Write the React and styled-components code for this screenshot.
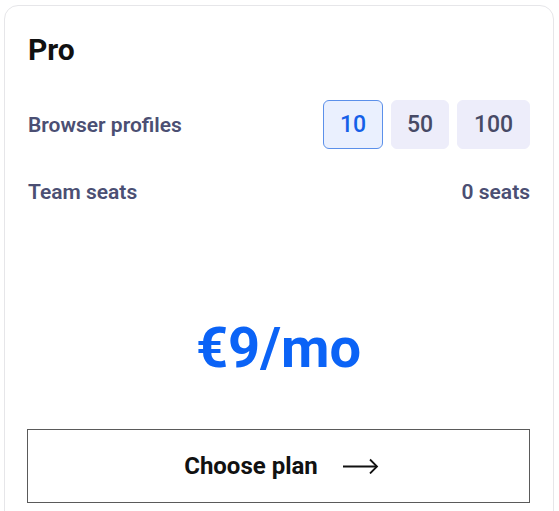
import React, { useState } from "react";
import styled, { createGlobalStyle } from "styled-components";

const GlobalStyle = createGlobalStyle`
  body {
    margin: 0;
    background: #ffffff;
    font-family: Roboto, "Liberation Sans", sans-serif;
  }
`;

const Card = styled.div`
  box-sizing: border-box;
  width: 550px;
  height: 540px;
  margin: 5px 0 0 4px;
  padding: 26px 23px 0 22px;
  border: 1px solid #e6e6e9;
  border-radius: 14px;
  background: #fff;
  display: flex;
  flex-direction: column;
`;

const Title = styled.h2`
  margin: 0;
  font-size: 30px;
  line-height: 36px;
  font-weight: 700;
  color: #111;
  padding-left: 1px;
`;

const Row = styled.div`
  display: flex;
  align-items: center;
  justify-content: space-between;
  margin-top: ${(p) => p.$gap}px;
  padding-left: 1px;
`;

const Label = styled.span`
  font-size: 21px;
  line-height: 24px;
  font-weight: 600;
  color: #4b4f73;
`;

const Options = styled.div`
  display: flex;
  gap: 8px;
`;

const Option = styled.button`
  box-sizing: border-box;
  height: 49px;
  min-width: ${(p) => p.$w}px;
  padding: 0;
  border-radius: 6px;
  border: 1px solid ${(p) => (p.$active ? "#5b90ea" : "#ededfa")};
  background: ${(p) => (p.$active ? "#eaf0fe" : "#ededfa")};
  color: ${(p) => (p.$active ? "#1560e8" : "#474a66")};
  font-family: Roboto, "Liberation Sans", sans-serif;
  font-size: 23px;
  font-weight: 500;
  cursor: pointer;
`;

const Price = styled.div`
  margin-top: 113px;
  text-align: center;
  font-size: 56px;
  line-height: 62px;
  font-weight: 700;
  color: #0b63f6;
`;

const ChooseButton = styled.button`
  box-sizing: border-box;
  margin-top: 50px;
  width: 503px;
  height: 74px;
  padding: 0 0 0 6px;
  border: 1px solid #5a5a5a;
  background: #fff;
  display: flex;
  align-items: center;
  justify-content: center;
  gap: 25px;
  font-family: Roboto, "Liberation Sans", sans-serif;
  font-size: 24px;
  font-weight: 700;
  color: #111;
  cursor: pointer;
`;

const Arrow = () => (
  <svg width="36" height="16" viewBox="0 0 36 16" fill="none" stroke="#111" strokeWidth="1.8">
    <path d="M0 8.5h34" />
    <path d="M27 1.5l7 7-7 7" strokeLinejoin="miter" />
  </svg>
);

const choices = [
  { v: 10, w: 60 },
  { v: 50, w: 58 },
  { v: 100, w: 73 },
];

export default function App() {
  const [profiles, setProfiles] = useState(10);
  return (
    <>
      <GlobalStyle />
      <Card>
        <Title>Pro</Title>
        <Row $gap={32}>
          <Label>Browser profiles</Label>
          <Options>
            {choices.map((c) => (
              <Option key={c.v} $w={c.w} $active={profiles === c.v} onClick={() => setProfiles(c.v)}>
                {c.v}
              </Option>
            ))}
          </Options>
        </Row>
        <Row $gap={31}>
          <Label>Team seats</Label>
          <Label>0 seats</Label>
        </Row>
        <Price>€9/mo</Price>
        <ChooseButton>
          Choose plan
          <Arrow />
        </ChooseButton>
      </Card>
    </>
  );
}
